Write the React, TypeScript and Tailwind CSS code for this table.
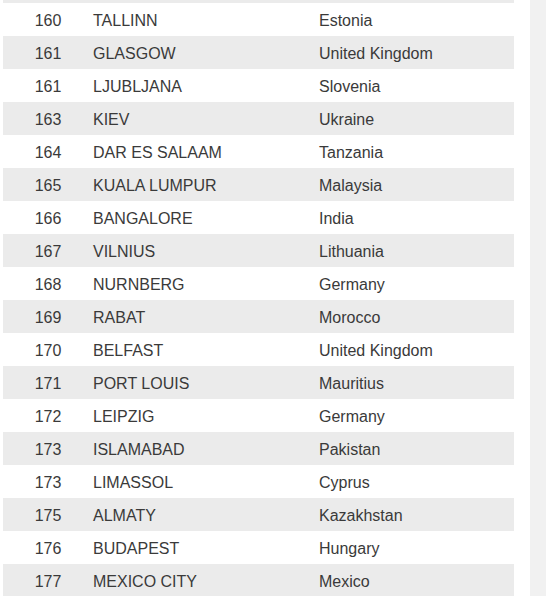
const rows: [string, string, string][] = [
  ['160', 'TALLINN', 'Estonia'],
  ['161', 'GLASGOW', 'United Kingdom'],
  ['161', 'LJUBLJANA', 'Slovenia'],
  ['163', 'KIEV', 'Ukraine'],
  ['164', 'DAR ES SALAAM', 'Tanzania'],
  ['165', 'KUALA LUMPUR', 'Malaysia'],
  ['166', 'BANGALORE', 'India'],
  ['167', 'VILNIUS', 'Lithuania'],
  ['168', 'NURNBERG', 'Germany'],
  ['169', 'RABAT', 'Morocco'],
  ['170', 'BELFAST', 'United Kingdom'],
  ['171', 'PORT LOUIS', 'Mauritius'],
  ['172', 'LEIPZIG', 'Germany'],
  ['173', 'ISLAMABAD', 'Pakistan'],
  ['173', 'LIMASSOL', 'Cyprus'],
  ['175', 'ALMATY', 'Kazakhstan'],
  ['176', 'BUDAPEST', 'Hungary'],
  ['177', 'MEXICO CITY', 'Mexico'],
]

export default function App() {
  return (
    <div className="flex h-[596px] w-[549px] overflow-hidden bg-white font-['Liberation_Sans',Arial,sans-serif] text-[16px] text-[#3a3a3a]">
      <div className="ml-[3px] w-[511px]">
        <div className="h-[3px] bg-[#ebebeb]" />
        {rows.map(([rank, city, country], i) => (
          <div
            key={i}
            className={`grid h-[33px] grid-cols-[90px_226px_1fr] items-center pt-[2px] ${i % 2 === 1 ? 'bg-[#ebebeb]' : 'bg-white'}`}
          >
            <span className="text-center">{rank}</span>
            <span>{city}</span>
            <span>{country}</span>
          </div>
        ))}
      </div>
      <div className="ml-[16px] h-full w-[16px] bg-[#f1f1f1]" />
    </div>
  )
}
